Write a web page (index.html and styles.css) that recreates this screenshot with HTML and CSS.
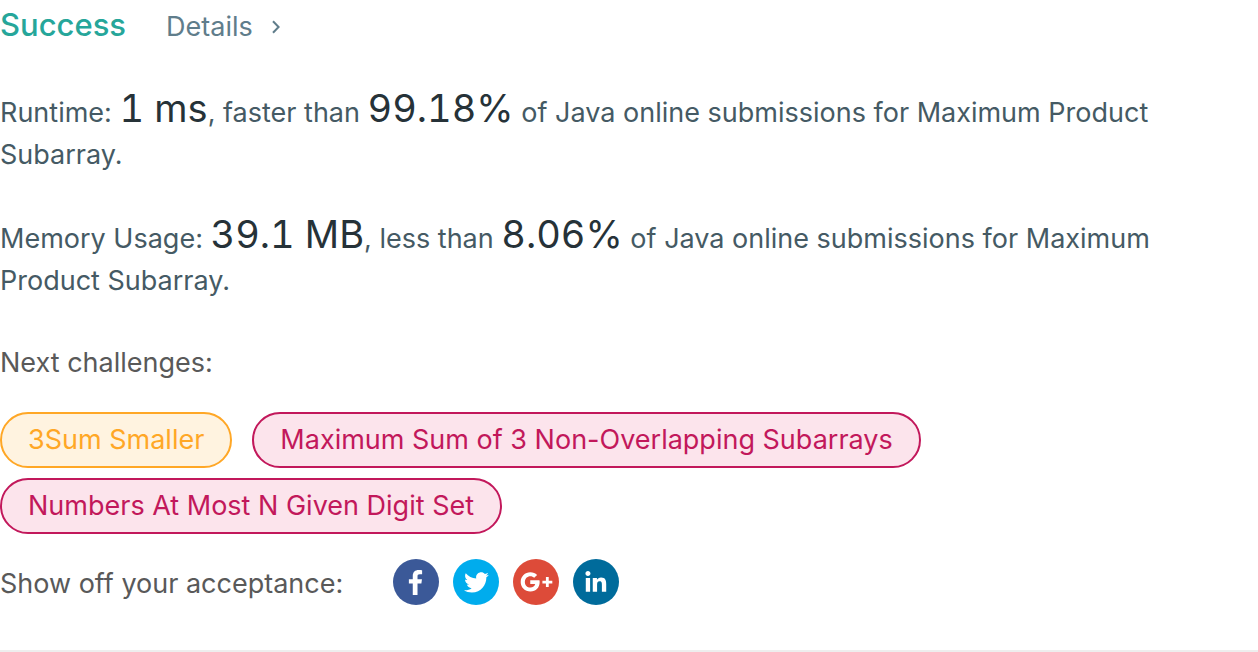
FILE: index.html
```
<!DOCTYPE html>
<html lang="en">
<head>
<meta charset="utf-8">
<title>Submission result</title>
<link rel="stylesheet" href="styles.css">
</head>
<body>
<main class="result">
  <header class="status">
    <h1 class="status-title">Success</h1>
    <a class="details" href="#details">Details
      <svg class="chevron" viewBox="0 0 10 14" aria-hidden="true"><path d="M2 1.2 7.6 7 2 12.8"/></svg>
    </a>
  </header>
  <div class="metrics">
    <p class="metric">Runtime: <span class="value">1 ms</span>, faster than <span class="value">99.18%</span> of Java online submissions for Maximum Product Subarray.</p>
    <p class="metric">Memory Usage: <span class="value">39.1 MB</span>, less than <span class="value">8.06%</span> of Java online submissions for Maximum Product Subarray.</p>
  </div>
  <h2 class="label">Next challenges:</h2>
  <nav class="challenges" aria-label="Next challenges">
    <a class="tag medium" href="#3sum">3Sum Smaller</a>
    <a class="tag hard" href="#max-sum">Maximum Sum of 3 Non-Overlapping Subarrays</a>
    <a class="tag hard" href="#numbers">Numbers At Most N Given Digit Set</a>
  </nav>
  <section class="share">
    <span class="label">Show off your acceptance:</span>
    <div class="networks">
      <a href="#facebook" aria-label="Facebook"><svg viewBox="0 0 64 64"><circle cx="32" cy="32" r="32" fill="#3b5998"/><path fill="#fff" d="M34.1 50V34.2h5.4l.8-6.2h-6.2v-3.8c0-1.8.5-3 3.1-3h3.3v-5.5c-.6-.1-2.6-.3-4.9-.3-4.8 0-8.1 2.9-8.1 8.3V28h-5.4v6.2h5.4V50z"/></svg></a>
      <a href="#twitter" aria-label="Twitter"><svg viewBox="0 0 64 64"><circle cx="32" cy="32" r="32" fill="#00aced"/><path fill="#fff" transform="translate(-2 -2) scale(1.08)" d="M48 22.1c-1.2.5-2.4.9-3.8 1 1.4-.8 2.4-2.1 2.9-3.6-1.3.8-2.7 1.3-4.2 1.6C41.7 19.8 40 19 38.2 19c-3.6 0-6.6 2.9-6.6 6.6 0 .5.1 1 .2 1.5-5.5-.3-10.3-2.9-13.5-6.9-.6 1-.9 2.1-.9 3.3 0 2.3 1.2 4.3 2.9 5.5-1.1 0-2.1-.3-3-.8v.1c0 3.2 2.3 5.8 5.3 6.4-.6.1-1.1.2-1.7.2-.4 0-.8 0-1.2-.1.8 2.6 3.3 4.5 6.1 4.6-2.2 1.8-5.1 2.8-8.2 2.8-.5 0-1.1 0-1.6-.1 2.9 1.9 6.4 2.9 10.1 2.9 12.1 0 18.7-10 18.7-18.7v-.8c1.3-.9 2.4-2.1 3.2-3.4z"/></svg></a>
      <a href="#google" aria-label="Google Plus"><svg viewBox="0 0 64 64"><circle cx="32" cy="32" r="32" fill="#dd4b39"/><path fill="#fff" d="M24 29.4v5.5h6.9c-.7 2.8-3.2 4.8-6.7 4.8-4.4 0-7.7-3.4-7.7-7.8s3.3-7.8 7.7-7.8c2.1 0 3.9.8 5.3 2.1l4-4c-2.3-2.2-5.5-3.6-9.3-3.6-7.5 0-13.5 5.8-13.5 13.3s6 13.3 13.5 13.3c7.8 0 12.9-5.4 12.9-13.1 0-.9-.1-1.9-.3-2.7H24zM45.8 25.2v5h-4.9v3.9h4.9v5h3.9v-5h5v-3.9h-5v-5z"/></svg></a>
      <a href="#linkedin" aria-label="LinkedIn"><svg viewBox="0 0 64 64"><circle cx="32" cy="32" r="32" fill="#006b9b"/><path fill="#fff" d="M17.8 45.7h6V26.4h-6v19.3zm3-29c-1.9 0-3.5 1.6-3.5 3.5s1.6 3.5 3.5 3.5 3.5-1.6 3.5-3.5-1.6-3.5-3.5-3.5zm18.3 9.2c-2.9 0-4.9 1.6-5.7 3.1h-.1v-2.6h-5.8v19.3h6v-9.6c0-2.5.4-5 3.6-5 3.1 0 3.1 2.9 3.1 5.1v9.5h6V35.1c0-5.2-1.1-9.2-7.1-9.2z"/></svg></a>
    </div>
  </section>
</main>
</body>
</html>
```
FILE: styles.css
```
* { box-sizing: border-box; }
body {
  margin: 0;
  background: #fff;
  color: #595959;
  font: 27px/42px Inter, "Open Sans", sans-serif;
}
a { text-decoration: none; }
.result { border-bottom: 2px solid #eee; padding: 4px 80px 45px 0; }
.status { display: flex; align-items: baseline; gap: 40px; margin-bottom: 44px; }
.status-title { margin: 0; color: #26a69a; font-size: 31px; font-weight: 500; line-height: 42px; }
.details { display: flex; align-items: center; gap: 18px; color: #607d8b; }
.chevron { width: 10px; height: 14px; fill: none; stroke: currentColor; stroke-width: 2; }
.metrics { display: grid; gap: 42px; margin-bottom: 40px; }
.metric { margin: 0; color: #455a64; }
.value { color: #263238; font-size: 38px; line-height: 30px; font-variant-numeric: tabular-nums; }
.label { margin: 0; font-size: 27px; font-weight: 400; }
.challenges { display: flex; flex-wrap: wrap; gap: 10px 20px; margin: 28px 0 25px; }
.tag { border: 2px solid; border-radius: 28px; padding: 5px 26px; }
.medium { color: #ffa726; background: #fff3e0; }
.hard { color: #c2185b; background: #fce4ec; }
.share { display: flex; align-items: flex-end; gap: 50px; }
.networks { display: flex; gap: 14px; }
.networks a { width: 46px; height: 46px; }
.networks svg { display: block; width: 46px; height: 46px; }
```
